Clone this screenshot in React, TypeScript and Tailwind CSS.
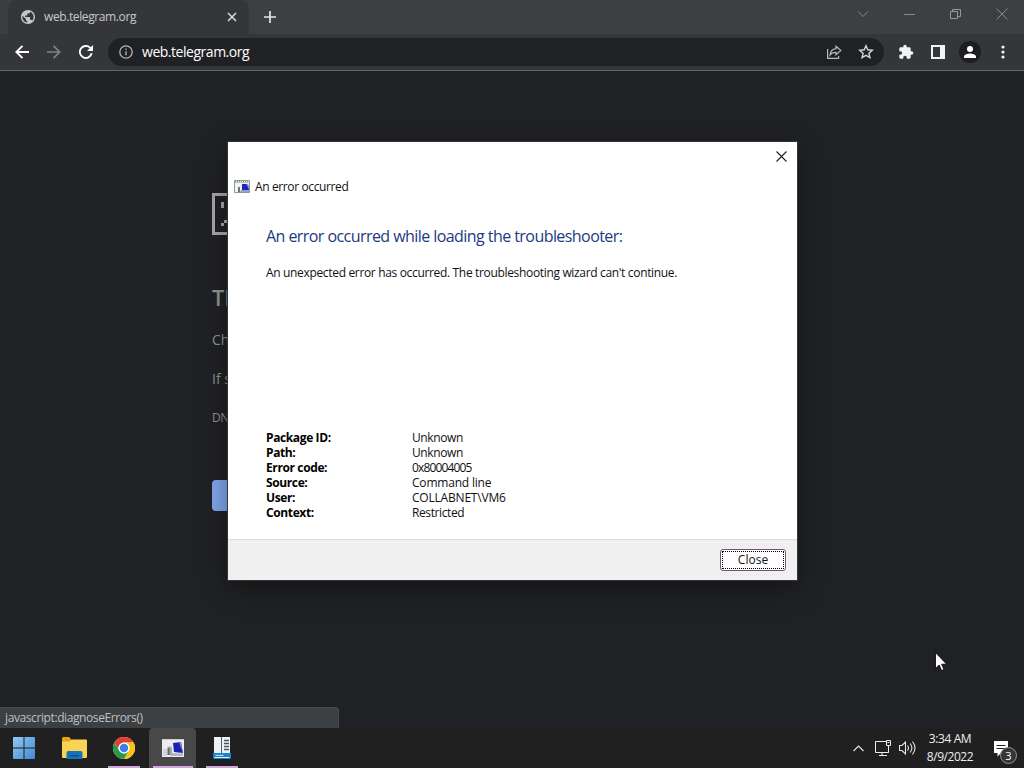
import type { ReactNode } from 'react';

const details = [
  { label: 'Package ID:', value: 'Unknown', valueClass: 'tracking-[-0.4px]' },
  { label: 'Path:', value: 'Unknown', valueClass: 'tracking-[-0.4px]' },
  { label: 'Error code:', value: '0x80004005', valueClass: 'tracking-[-0.85px]' },
  { label: 'Source:', value: 'Command line', valueClass: 'tracking-[-0.2px]' },
  { label: 'User:', value: 'COLLABNET\\VM6', valueClass: 'tracking-[-0.2px]' },
  { label: 'Context:', value: 'Restricted', valueClass: 'tracking-[-0.4px]' },
];

function GlobeIcon() {
  return (
    <svg width="14" height="14" viewBox="2 2 20 20" fill="#c4c7c9">
      <path d="M12 2C6.48 2 2 6.48 2 12s4.480 10 10 10 10-4.480 10-10S17.520 2 12 2zm-1 17.930c-3.950-.490-7-3.850-7-7.930 0-.620.080-1.210.210-1.790L9 15v1c0 1.100.900 2 2 2v1.930zm6.900-2.540c-.260-.810-1-1.390-1.900-1.390h-1v-3c0-.550-.450-1-1-1H8v-2h2c.550 0 1-.450 1-1V7h2c1.100 0 2-.900 2-2v-.410c2.930 1.190 5 4.060 5 7.410 0 2.080-.800 3.970-2.100 5.390z" />
    </svg>
  );
}

function TabBar() {
  return (
    <div className="flex h-[34px] bg-[#3c4043]">
      <div className="w-[8px] rounded-br-lg bg-[#3c3d42]" />
      <div className="flex w-[241px] items-center rounded-t-lg bg-[#35363a] pl-[13px] pr-3">
        <GlobeIcon />
        <span className="ml-[9px] flex-1 whitespace-nowrap text-[12px] leading-4 tracking-[-0.39px] text-[#c5c8cb]">
          web.telegram.org
        </span>
        <svg width="10" height="10" viewBox="0 0 10 10" stroke="#dadce0" strokeWidth="1.5">
          <path d="m1 1 8 8M9 1 1 9" />
        </svg>
      </div>
      <div className="flex flex-1 items-center pl-[15px]">
        <svg width="12" height="12" viewBox="0 0 12 12" stroke="#e4e6e8" strokeWidth="1.7">
          <path d="M6 0v12M0 6h12" />
        </svg>
      </div>
      <div className="flex h-[28px] items-center gap-[35px] pr-4">
        <svg width="12" height="12" viewBox="0 0 12 12" fill="none" stroke="#85898b">
          <path d="m1 3.500 5 5 5-5" />
        </svg>
        <svg width="11" height="12" viewBox="0 0 11 12" stroke="#85898b">
          <path d="M0 6.500h11" />
        </svg>
        <svg width="11" height="12" viewBox="0 0 11 12" fill="none" stroke="#94989a">
          <path d="M.500 3.500h7v7h-7zM2.500 3.500v-2h8v7h-3" />
        </svg>
        <svg width="12" height="12" viewBox="0 0 12 12" stroke="#85898b">
          <path d="m.500.500 11 11M11.500.500l-11 11" />
        </svg>
      </div>
    </div>
  );
}

function Toolbar() {
  return (
    <div className="flex h-[37px] items-center border-b border-[#65686b] bg-[#35363a]">
      <div className="flex items-center gap-[18px] pl-[15px]">
        <svg width="14" height="14" viewBox="0 0 14 14" fill="none" stroke="#fff" strokeWidth="1.9">
          <path d="M14 7H1.500M7.500.800 1.300 7l6.200 6.200" />
        </svg>
        <svg width="14" height="14" viewBox="0 0 14 14" fill="none" stroke="#7f8286" strokeWidth="1.7">
          <path d="M0 7h12.500M6.500.800 12.700 7l-6.200 6.200" />
        </svg>
        <svg width="14" height="14" viewBox="0 0 14 14" fill="none" stroke="#fff" strokeWidth="1.9">
          <path d="M12.700 8.300A6 6 0 1 1 11.400 3" />
          <path d="M14 0v6H8Z" fill="#fff" stroke="none" />
        </svg>
      </div>
      <div className="ml-[15px] flex h-7 w-[776px] items-center rounded-full bg-[#202124] pl-[11px] pr-[10px]">
        <svg width="14" height="14" viewBox="0 0 14 14" fill="none" stroke="#b4b7ba" strokeWidth="1.3">
          <circle cx="7" cy="7" r="6.2" />
          <path d="M7 6.300v4M7 3.500v1.500" />
        </svg>
        <span className="ml-[9px] flex-1 whitespace-nowrap text-[14px] leading-5 tracking-[-0.47px] text-white">
          web.telegram.org
        </span>
        <svg className="mr-4" width="16" height="15" viewBox="0 0 16 15" fill="none" stroke="#b8bbbe" strokeWidth="1.2">
          <path d="M1.600 4v9.400h11V11" />
          <path d="M10 1.300 14.800 5.500 10 9.700V7.400C7.500 7.300 5.500 8 4 10c.400-3.500 2.500-6 6-6.400Z" />
        </svg>
        <svg width="16" height="16" viewBox="0 0 16 16" fill="none" stroke="#d4d6d9" strokeWidth="1.4">
          <path d="m8 1.700 1.800 4.100 4.500.400-3.400 3 1 4.400L8 11.300l-3.900 2.300 1-4.400-3.400-3 4.500-.400Z" />
        </svg>
      </div>
      <div className="ml-3.5 flex items-center">
        <svg width="16" height="16" viewBox="0 0 24 24" fill="#f1f3f4">
          <path d="M20.500 11H19V7c0-1.100-.900-2-2-2h-4V3.500a2.500 2.500 0 0 0-5 0V5H4c-1.100 0-2 .900-2 2v3.800h1.500a2.700 2.700 0 0 1 0 5.400H2V20c0 1.100.900 2 2 2h3.800v-1.500a2.700 2.700 0 0 1 5.400 0V22H17c1.100 0 2-.900 2-2v-4h1.500a2.500 2.500 0 0 0 0-5Z" />
        </svg>
        <svg className="ml-[17px]" width="14" height="14" viewBox="0 0 14 14" fill="#f1f3f4">
          <path d="M0 0h14v14H0ZM2 2v10h7V2Z" fillRule="evenodd" />
        </svg>
        <div className="ml-[14px] flex size-[22px] items-center justify-center rounded-full bg-[#1d1e21]">
          <svg width="12" height="12" viewBox="0 0 12 12" fill="#fff">
            <circle cx="6" cy="3" r="3" />
            <path d="M0 12v-1.500C0 8.500 4 7.500 6 7.500s6 1 6 3V12Z" />
          </svg>
        </div>
        <svg className="ml-[20px]" width="4" height="14" viewBox="0 0 4 14" fill="#f1f3f4">
          <circle cx="2" cy="2" r="1.6" />
          <circle cx="2" cy="7" r="1.6" />
          <circle cx="2" cy="12" r="1.6" />
        </svg>
      </div>
    </div>
  );
}

function ErrorPage() {
  return (
    <div className="flex flex-col items-start pl-[212px] pt-[122px] text-[#8f9295]">
      <svg width="40" height="42" viewBox="0 0 40 42" fill="#a4a6a8">
        <path d="M0 0h40v42H0ZM3 3v36h34V3Z" fillRule="evenodd" />
        <path d="M9 9h3v6H9zM9 30h3v3H9zM12 27h4v3h-4z" />
      </svg>
      <h1 className="mt-[47px] text-[22px] font-semibold leading-[30px]">Th</h1>
      <p className="mt-[18px] text-[14px] leading-5">Ch</p>
      <p className="mt-[19px] text-[14px] leading-5">If s</p>
      <p className="mt-[19px] text-[12px] leading-5 tracking-[-0.4px]">DN</p>
      <div className="mt-[52px] h-[31px] w-16 rounded bg-[#80a5e8]" />
    </div>
  );
}

function DialogIcon() {
  return (
    <svg width="16" height="13" viewBox="0 0 16 13">
      <path d="M.500.500h15v12H.500Z" fill="#f2f4f3" stroke="#8d9994" />
      <path d="M1 1.500h14" stroke="#8d9994" strokeDasharray="1 1" />
      <path d="M1 2.500h14" stroke="#b9c2be" />
      <path d="M4 7h2v5H4Z" fill="#6e7277" />
      <path d="M8 4h6l1 6H8Z" fill="#2226b8" />
      <path d="M12 4h2l1 5Z" fill="#7c86df" />
      <path d="M7 10h8v2H6Z" fill="#9aa2cc" />
    </svg>
  );
}

function ComputerIcon() {
  return (
    <svg width="22" height="18" viewBox="0 0 22 18">
      <path d="M0 0h22v18H0Z" fill="#eceded" />
      <path d="M0 .500h22" stroke="#c9cccd" />
      <path d="M1 10h4v7H1Z" fill="#d2d3d4" />
      <path d="M5 9l3-2 2 2v7H5Z" fill="#a5a7ab" />
      <path d="M6 9h1.500v7H6Z" fill="#65676c" />
      <path d="m11 4 8-1 2 11-9-1Z" fill="#1a20b4" />
      <path d="m17 3.500 2-.500 2 11Z" fill="#7580e6" />
      <path d="m10 14 11 .500V17H8Z" fill="#b3b8c8" />
    </svg>
  );
}

function TroubleshooterDialog() {
  return (
    <div className="absolute left-[228px] top-[142px] flex h-[438px] w-[569px] flex-col bg-white text-[12px] text-[#111] shadow-[0_8px_24px_rgba(0,0,0,0.4)] outline outline-1 outline-[#343538]">
      <div className="flex h-7 items-center justify-end pr-[10px]">
        <svg width="11" height="11" viewBox="0 0 11 11" stroke="#222" strokeWidth="1.1">
          <path d="m.500.500 10 10M10.500.500l-10 10" />
        </svg>
      </div>
      <div className="flex h-[34px] items-center pl-1.5">
        <div className="mb-0.5">
          <DialogIcon />
        </div>
        <span className="ml-[5px] whitespace-nowrap leading-4 tracking-[-0.38px]">An error occurred</span>
      </div>
      <div className="flex flex-1 flex-col pl-[38px]">
        <h2 className="mt-5 whitespace-nowrap text-[16px] leading-6 tracking-[-0.56px] text-[#1a3a82]">
          An error occurred while loading the troubleshooter:
        </h2>
        <p className="mt-[17px] whitespace-nowrap leading-4 tracking-[-0.335px]">
          An unexpected error has occurred. The troubleshooting wizard can't continue.
        </p>
        <dl className="mt-auto mb-[19px]">
          {details.map((row) => (
            <div key={row.label} className="flex h-[15px] whitespace-nowrap leading-[15px]">
              <dt className="w-[146px] font-bold tracking-[-0.38px] text-black">{row.label}</dt>
              <dd className={row.valueClass}>{row.value}</dd>
            </div>
          ))}
        </dl>
      </div>
      <div className="flex h-[41px] items-center justify-end border-t border-[#dcdcdd] bg-[#f0f0f0] pr-[11px]">
        <button className="flex h-[22px] w-[66px] rounded-[3px] border border-[#78517d] bg-white p-px">
          <span className="flex h-full w-full items-center justify-center border border-dotted border-black leading-4">
            Close
          </span>
        </button>
      </div>
    </div>
  );
}

function WindowsIcon() {
  return (
    <svg width="22" height="22" viewBox="0 0 22 22">
      <defs>
        <linearGradient id="win" x2="1" y2="1">
          <stop stopColor="#92c9f2" />
          <stop offset="1" stopColor="#4288d6" />
        </linearGradient>
      </defs>
      <path
        d="M1 0h9.500v10.500H0V1Q0 0 1 0ZM11.500 0H21q1 0 1 1v9.500H11.500ZM0 11.500h10.500V22H1q-1 0-1-1ZM11.500 11.500H22V21q0 1-1 1h-9.500Z"
        fill="url(#win)"
      />
    </svg>
  );
}

function FolderIcon() {
  return (
    <svg width="25" height="22" viewBox="0 0 25 22">
      <path d="M0 1.500Q0 0 1.500 0H7l3 3h14q1 0 1 1v4H0Z" fill="#e8a317" />
      <path d="M0 4.500h7.500L10 2.500h14q1 0 1 1V20q0 1-1 1H1q-1 0-1-1Z" fill="#fbd354" />
      <path d="M4.500 22V16q0-2 2-2h12q2 0 2 2v6Z" fill="#1573b9" />
      <path d="M8 18h9v1.500H8Z" fill="#0c4f87" />
    </svg>
  );
}

function ChromeIcon() {
  return (
    <svg width="22" height="22" viewBox="0 0 24 24">
      <circle cx="12" cy="12" r="12" fill="#fff" />
      <path d="M1.600 6A12 12 0 0 1 22.400 6H12a6 6 0 0 0-5.200 9Z" fill="#e43e2f" />
      <path d="M22.400 6A12 12 0 0 1 12 24l5.200-9A6 6 0 0 0 12 6Z" fill="#fbc116" />
      <path d="M12 24A12 12 0 0 1 1.600 6l5.200 9a6 6 0 0 0 10.400 0Z" fill="#269b47" />
      <circle cx="12" cy="12" r="5.9" fill="#fff" />
      <circle cx="12" cy="12" r="4.6" fill="#3b7ded" />
    </svg>
  );
}

function ServerIcon() {
  return (
    <svg width="18" height="22" viewBox="0 0 18 22">
      <path d="M1 0h16v17H1Z" fill="#eff2f4" />
      <path d="M8.500 0v16" stroke="#525b61" />
      <path d="M11 3.500h5M11 6.500h5M11 9.500h5M11 12.500h5" stroke="#4c555b" strokeWidth="1.3" />
      <path d="M0 16h18v5q0 1-1 1H1q-1 0-1-1Z" fill="#1683cf" />
      <path d="M1.500 20h15v1h-15Z" fill="#e4f3fc" />
      <path d="M2.500 17.800h8v1.200h-8Z" fill="#b6dcf4" />
    </svg>
  );
}

function TaskItem({ children, running, active }: { children: ReactNode; running?: boolean; active?: boolean }) {
  return (
    <div className={`flex h-full w-[47px] flex-col items-center justify-between ${active ? 'rounded-t bg-[#484848]' : ''}`}>
      <div className="flex h-[38px] items-center justify-center pt-px">{children}</div>
      {running && <div className={`h-0.5 bg-[#d2a6dc] ${active ? 'w-10' : 'w-8'}`} />}
    </div>
  );
}

function Taskbar() {
  return (
    <div className="flex h-10 items-center bg-[#202021]">
      <div className="flex h-full gap-0.5">
        <TaskItem>
          <WindowsIcon />
        </TaskItem>
        <div className="-ml-px w-px" />
        <TaskItem>
          <FolderIcon />
        </TaskItem>
        <TaskItem running>
          <ChromeIcon />
        </TaskItem>
        <TaskItem running active>
          <ComputerIcon />
        </TaskItem>
        <TaskItem running>
          <ServerIcon />
        </TaskItem>
      </div>
      <div className="ml-auto flex items-center">
        <svg width="11" height="7" viewBox="0 0 11 7" fill="none" stroke="#e6e6e6" strokeWidth="1.1">
          <path d="m.500 6 5-5 5 5" />
        </svg>
        <svg className="ml-[11px]" width="16" height="16" viewBox="0 0 16 16" fill="none" stroke="#ededed">
          <path d="M11 1.500H.500v11h13V7M7 12.500v3M4 15.500h8" />
          <path d="M11.500.500h4v5h-4ZM13.500 5.500v7M12.500 2.500h2" />
        </svg>
        <svg className="ml-2" width="17" height="14" viewBox="0 0 17 14" fill="none" stroke="#e6e6e6" strokeWidth="1.1">
          <path d="M.500 4.500H3L6.500 1v12L3 9.500H.500ZM8.500 4.500q2 2.500 0 5M11 2.500q3.800 4.500 0 9M13.500.500q5 6.500 0 13" />
        </svg>
        <div className="ml-[9px] flex w-[50px] flex-col items-center whitespace-nowrap text-[12px] leading-[18px] text-[#ededed]">
          <span className="tracking-[-0.4px]">3:34 AM</span>
          <span className="tracking-[-0.45px]">8/9/2022</span>
        </div>
        <div className="relative ml-[19px] h-10 w-[30px]">
          <svg width="15" height="16" viewBox="0 0 15 16" className="mt-[13px]">
            <path d="M0 0h14v12H7l-3.500 3.500V12H0Z" fill="#fff" />
            <path d="M2.500 4.500h9M2.500 7.500h9" stroke="#252525" />
          </svg>
          <span className="absolute left-[6px] top-[19px] flex size-[17px] items-center justify-center rounded-full border border-[#929292] bg-[#363636] text-[11px] leading-none text-white">
            3
          </span>
        </div>
      </div>
    </div>
  );
}

export default function App() {
  return (
    <div className="relative flex h-[768px] w-[1024px] flex-col overflow-hidden bg-[#202124] font-['Open_Sans','Noto_Sans',sans-serif]">
      <TabBar />
      <Toolbar />
      <div className="relative flex-1">
        <ErrorPage />
        <div className="absolute bottom-0 left-0 flex h-[21px] w-[339px] items-center whitespace-nowrap rounded-tr-[4px] border-t border-r border-[#46494c] bg-[#3c4043] pl-[5px] text-[12px] leading-4 tracking-[-0.4px] text-[#bec1c4]">
          javascript:diagnoseErrors()
        </div>
      </div>
      <Taskbar />
      <TroubleshooterDialog />
      <svg className="absolute left-[935px] top-[652px]" width="12" height="19" viewBox="0 0 12 19">
        <path d="M.500.500v16l3.700-3.500 2.400 5.500 2.400-1-2.400-5.300h5Z" fill="#fff" stroke="#000" strokeWidth=".8" />
      </svg>
    </div>
  );
}
